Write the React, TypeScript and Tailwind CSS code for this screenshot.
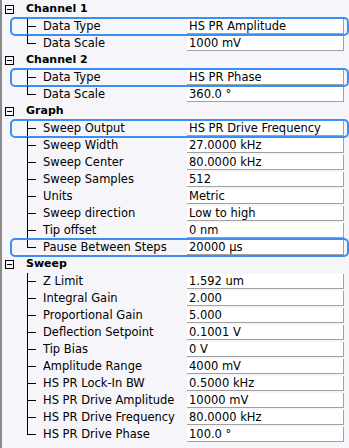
import React from "react";

type Row = { label: string; value: string; active?: boolean };
type Section = { title: string; rows: Row[] };

const sections: Section[] = [
  {
    title: "Channel 1",
    rows: [
      { label: "Data Type", value: "HS PR Amplitude", active: true },
      { label: "Data Scale", value: "1000 mV" },
    ],
  },
  {
    title: "Channel 2",
    rows: [
      { label: "Data Type", value: "HS PR Phase", active: true },
      { label: "Data Scale", value: "360.0 °" },
    ],
  },
  {
    title: "Graph",
    rows: [
      { label: "Sweep Output", value: "HS PR Drive Frequency", active: true },
      { label: "Sweep Width", value: "27.0000 kHz" },
      { label: "Sweep Center", value: "80.0000 kHz" },
      { label: "Sweep Samples", value: "512" },
      { label: "Units", value: "Metric" },
      { label: "Sweep direction", value: "Low to high" },
      { label: "Tip offset", value: "0 nm" },
      { label: "Pause Between Steps", value: "20000 µs", active: true },
    ],
  },
  {
    title: "Sweep",
    rows: [
      { label: "Z Limit", value: "1.592 um" },
      { label: "Integral Gain", value: "2.000" },
      { label: "Proportional Gain", value: "5.000" },
      { label: "Deflection Setpoint", value: "0.1001 V" },
      { label: "Tip Bias", value: "0 V" },
      { label: "Amplitude Range", value: "4000 mV" },
      { label: "HS PR Lock-In BW", value: "0.5000 kHz" },
      { label: "HS PR Drive Amplitude", value: "10000 mV" },
      { label: "HS PR Drive Frequency", value: "80.0000 kHz" },
      { label: "HS PR Drive Phase", value: "100.0 °" },
    ],
  },
];

function Collapse() {
  return (
    <div className="relative ml-[3px] h-[9px] w-[9px] shrink-0 border border-black">
      <div className="absolute left-[1px] right-[1px] top-[3px] h-px bg-black" />
    </div>
  );
}

function Branch({ last }: { last: boolean }) {
  return (
    <svg width="9" height="17" className="ml-[25px] shrink-0" shapeRendering="crispEdges">
      <path d={last ? "M0.5 0V8.5M0 8.5H9" : "M0.5 0V17M0 8.5H9"} stroke="#000" fill="none" />
    </svg>
  );
}

function PropRow({ row, last }: { row: Row; last: boolean }) {
  return (
    <div className="relative flex h-[17px] items-center text-[11.5px]">
      <Branch last={last} />
      <div className="ml-[7px] w-[144px] shrink-0 overflow-hidden whitespace-nowrap">{row.label}</div>
      <div className="h-[15px] w-[157px] shrink-0 border-b border-r border-[#a0a0a0] bg-white pl-[2px] leading-[14px]">
        {row.value}
      </div>
      {row.active && (
        <div className="pointer-events-none absolute -bottom-px -top-px left-[8px] right-0 rounded-[5px] border-2 border-[#3b8ef3]" />
      )}
    </div>
  );
}

export default function App() {
  return (
    <div
      className="h-[448px] w-[349px] overflow-hidden border-l-2 border-[#8a8a8a] bg-[#f5f5fa] pt-px text-[11px] text-black"
      style={{ fontFamily: '"DejaVu Sans", sans-serif' }}
    >
      {sections.map((s) => (
        <div key={s.title}>
          <div className="flex h-[17px] items-center">
            <Collapse />
            <span className="ml-[12px] font-bold">{s.title}</span>
          </div>
          {s.rows.map((r, i) => (
            <PropRow key={r.label} row={r} last={i === s.rows.length - 1} />
          ))}
        </div>
      ))}
    </div>
  );
}
